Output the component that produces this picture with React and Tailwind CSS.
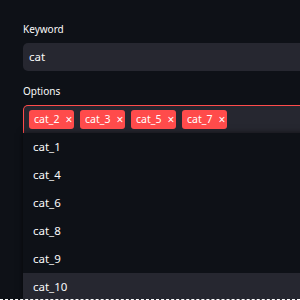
import React from 'react';

const selected = ['cat_2', 'cat_3', 'cat_5', 'cat_7'];
const options = ['cat_1', 'cat_4', 'cat_6', 'cat_8', 'cat_9', 'cat_10'];

function Tag({ label }) {
  return (
    <div className="flex items-center h-[19px] w-[45px] shrink-0 rounded-[3px] bg-[#ff4b4b] pl-[5px] text-[10.5px] text-white">
      <span>{label}</span>
      <span className="ml-[6px] text-[12px] leading-none">×</span>
    </div>
  );
}

export default function App() {
  return (
    <div
      className="relative w-[300px] h-[300px] overflow-hidden bg-[#0e1117] text-[#fafafa]"
      style={{ fontFamily: '"Noto Sans", "Open Sans", sans-serif' }}
    >
      <div className="w-[320px] pl-[23px] pt-[22px]">
        {/* Keyword */}
        <div className="h-[14px] text-[10px] leading-[14px]">Keyword</div>
        <div className="mt-[7px] flex h-[28px] items-center rounded-[5px] bg-[#262730] pl-[6px] text-[11.5px]">
          cat
        </div>

        {/* Options */}
        <div className="mt-[13px] h-[14px] text-[10px] leading-[14px]">Options</div>
        <div className="mt-[7px] flex h-[28px] items-center gap-[6px] rounded-t-[5px] border border-b-0 border-[#ff4b4b] bg-[#262730] pl-[5px]">
          {selected.map((s) => (
            <Tag key={s} label={s} />
          ))}
        </div>

        {/* Dropdown list */}
        <div className="bg-[#0e1117] shadow-[0_0_6px_rgba(0,0,0,0.6)]">
          {options.map((o, i) => (
            <div
              key={o}
              className={`flex h-[28px] items-center pl-[10px] text-[11.5px] ${
                i === options.length - 1 ? 'bg-[#262730]' : ''
              }`}
            >
              {o}
            </div>
          ))}
        </div>
      </div>
      <div className="absolute bottom-0 left-0 w-full border-b border-dashed border-white" />
    </div>
  );
}
